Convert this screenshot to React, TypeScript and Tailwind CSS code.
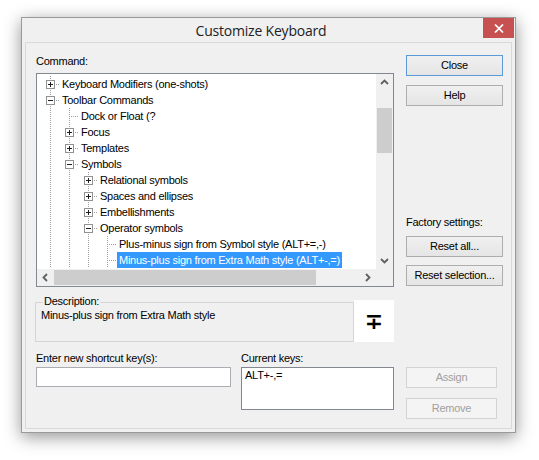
import React from "react";

type Row = { label: string; level: number; box?: "plus" | "minus"; selected?: boolean };

const rows: Row[] = [
  { label: "Keyboard Modifiers (one-shots)", level: 0, box: "plus" },
  { label: "Toolbar Commands", level: 0, box: "minus" },
  { label: "Dock or Float (?", level: 1 },
  { label: "Focus", level: 1, box: "plus" },
  { label: "Templates", level: 1, box: "plus" },
  { label: "Symbols", level: 1, box: "minus" },
  { label: "Relational symbols", level: 2, box: "plus" },
  { label: "Spaces and ellipses", level: 2, box: "plus" },
  { label: "Embellishments", level: 2, box: "plus" },
  { label: "Operator symbols", level: 2, box: "minus" },
  { label: "Plus-minus sign from Symbol style (ALT+=,-)", level: 3 },
  { label: "Minus-plus sign from Extra Math style (ALT+-,=)", level: 3, selected: true },
];

function TreeLines({ level, box }: { level: number; box?: "plus" | "minus" }) {
  const w = (level + 1) * 19;
  const els: React.ReactNode[] = [];
  for (let k = 0; k <= level; k++) {
    const x = k * 19 + 9.5;
    els.push(
      <line key={"v" + k} x1={x} y1={0} x2={x} y2={16} stroke="#a0a0a0" strokeWidth={1} strokeDasharray="1 1" />
    );
  }
  const cx = level * 19 + 9.5;
  els.push(
    <line key="h" x1={box ? cx + 5 : cx + 1} y1={8.5} x2={w} y2={8.5} stroke="#a0a0a0" strokeWidth={1} strokeDasharray="1 1" />
  );
  if (box) {
    els.push(
      <rect key="b" x={level * 19 + 5.5} y={4.5} width={8} height={8} fill="#ffffff" stroke="#919191" strokeWidth={1} />
    );
    els.push(
      <line key="m" x1={level * 19 + 7} y1={8.5} x2={level * 19 + 12} y2={8.5} stroke="#1e1e1e" strokeWidth={1} />
    );
    if (box === "plus") {
      els.push(<line key="p" x1={cx} y1={6} x2={cx} y2={11} stroke="#1e1e1e" strokeWidth={1} />);
    }
  }
  return (
    <svg width={w} height={16} className="shrink-0" shapeRendering="crispEdges">
      {els}
    </svg>
  );
}

function Chevron({ dir }: { dir: "up" | "down" | "left" | "right" }) {
  const pts =
    dir === "up"
      ? "5,10 8.5,6.5 12,10"
      : dir === "down"
      ? "5,7 8.5,10.5 12,7"
      : dir === "left"
      ? "10,5 6.5,8.5 10,12"
      : "7,5 10.5,8.5 7,12";
  return (
    <svg width={17} height={17} className="shrink-0">
      <polyline points={pts} fill="none" stroke="#606060" strokeWidth={1.8} />
    </svg>
  );
}

function Btn({
  label,
  w,
  def,
  disabled,
  className = "",
}: {
  label: string;
  w: string;
  def?: boolean;
  disabled?: boolean;
  className?: string;
}) {
  const border = def ? "border-[#5b9bd5]" : disabled ? "border-[#d3d3d3]" : "border-[#adadad]";
  const bg = disabled ? "bg-[#f4f4f4] text-[#a0a0a0]" : "bg-linear-to-b from-[#f0f0f0] to-[#e5e5e5] text-black";
  return (
    <div className={`flex h-[21px] items-center justify-center border ${border} ${bg} ${w} ${className}`}>
      {label}
    </div>
  );
}

export default function App() {
  return (
    <div className="h-[460px] w-[539px] bg-white pl-[21px] pt-[17px]">
      <div className="flex h-[416px] w-[495px] flex-col border border-[#9a9a9a] bg-[#f0f0f0] px-[3px] pb-[3px] shadow-[0_4px_16px_rgba(0,0,0,0.42)] font-['Liberation_Sans',Arial,sans-serif] text-[11px] tracking-[-0.25px] text-black">
        {/* title bar */}
        <div className="-mx-[3px] flex h-[24px] shrink-0 items-start">
          <div className="flex h-[24px] flex-1 items-center justify-center pl-[17px] font-['Open_Sans',sans-serif] text-[14px] tracking-[-0.2px] text-[#222222]">
            Customize Keyboard
          </div>
          <div className="mr-[1px] flex h-[20px] w-[31px] items-center justify-center bg-[#c75050]">
            <svg width={10} height={9}>
              <line x1={1} y1={0.5} x2={9} y2={8.5} stroke="#ffffff" strokeWidth={1.7} />
              <line x1={9} y1={0.5} x2={1} y2={8.5} stroke="#ffffff" strokeWidth={1.7} />
            </svg>
          </div>
        </div>

        {/* client */}
        <div className="flex flex-1 flex-col border border-[#d9d9d9] bg-[#f0f0f0] pl-[10px] pt-[12px]">
          <div className="flex">
            {/* left column */}
            <div className="flex w-[358px] flex-col">
              <div className="leading-[13px]">Command:</div>
              <div className="mt-[5px] flex h-[214px] w-[358px] flex-col border border-[#828790] bg-white">
                <div className="flex min-h-0 flex-1">
                  <div className="flex-1 overflow-hidden pl-[4px] pt-[2px]">
                    {rows.map((r) => (
                      <div key={r.label} className="flex h-[16px] items-center whitespace-nowrap">
                        <TreeLines level={r.level} box={r.box} />
                        <span
                          className={`px-[2px] leading-[16px] ${r.selected ? "bg-[#3399ff] text-white" : ""}`}
                        >
                          {r.label}
                        </span>
                      </div>
                    ))}
                  </div>
                  <div className="flex w-[17px] flex-col bg-[#f0f0f0]">
                    <Chevron dir="up" />
                    <div className="mx-[1px] mt-[17px] h-[45px] bg-[#cdcdcd]" />
                    <div className="flex-1" />
                    <Chevron dir="down" />
                  </div>
                </div>
                <div className="flex h-[17px] shrink-0">
                  <div className="flex flex-1 items-center bg-[#f0f0f0]">
                    <Chevron dir="left" />
                    <div className="my-[1px] h-[15px] w-[262px] bg-[#cdcdcd]" />
                    <div className="flex-1" />
                    <Chevron dir="right" />
                  </div>
                  <div className="w-[17px] bg-[#f0f0f0]" />
                </div>
              </div>

              {/* description */}
              <div className="-ml-px mt-[8px] flex h-[47px]">
                <div className="relative mt-[7px] h-[40px] w-[320px] border border-[#d5d5d5]">
                  <span className="absolute left-[7px] top-[-8px] bg-[#f0f0f0] px-[1px] leading-[13px]">
                    Description:
                  </span>
                  <div className="pl-[5px] pt-[6px] leading-[13px]">Minus-plus sign from Extra Math style</div>
                </div>
                <div className="mt-[5px] flex h-[42px] w-[40px] items-center justify-center bg-white pt-[1px] font-['DejaVu_Sans',sans-serif] text-[22px] font-bold leading-none tracking-normal text-black">
                  ∓
                </div>
              </div>
            </div>

            {/* right column */}
            <div className="ml-[12px] flex w-[97px] flex-col">
              <Btn label="Close" w="w-[97px]" def />
              <Btn label="Help" w="w-[97px]" className="mt-[9px]" />
              <div className="mt-[110px] leading-[13px]">Factory settings:</div>
              <Btn label="Reset all..." w="w-[97px]" className="mt-[7px]" />
              <Btn label="Reset selection..." w="w-[97px]" className="mt-[8px]" />
            </div>
          </div>

          {/* bottom */}
          <div className="mt-[10px] flex">
            <div className="flex w-[195px] flex-col">
              <div className="leading-[13px]">Enter new shortcut key(s):</div>
              <div className="mt-[2px] h-[20px] border border-[#abadb3] bg-white" />
            </div>
            <div className="ml-[10px] flex w-[153px] flex-col">
              <div className="leading-[13px]">Current keys:</div>
              <div className="mt-[2px] h-[43px] border border-[#828790] bg-white pl-[3px] pt-[1px] leading-[13px]">
                ALT+-,=
              </div>
            </div>
            <div className="ml-[12px] flex w-[91px] flex-col pt-[15px]">
              <Btn label="Assign" w="w-[91px]" disabled />
              <Btn label="Remove" w="w-[91px]" disabled className="mt-[10px]" />
            </div>
          </div>
        </div>
      </div>
    </div>
  );
}
